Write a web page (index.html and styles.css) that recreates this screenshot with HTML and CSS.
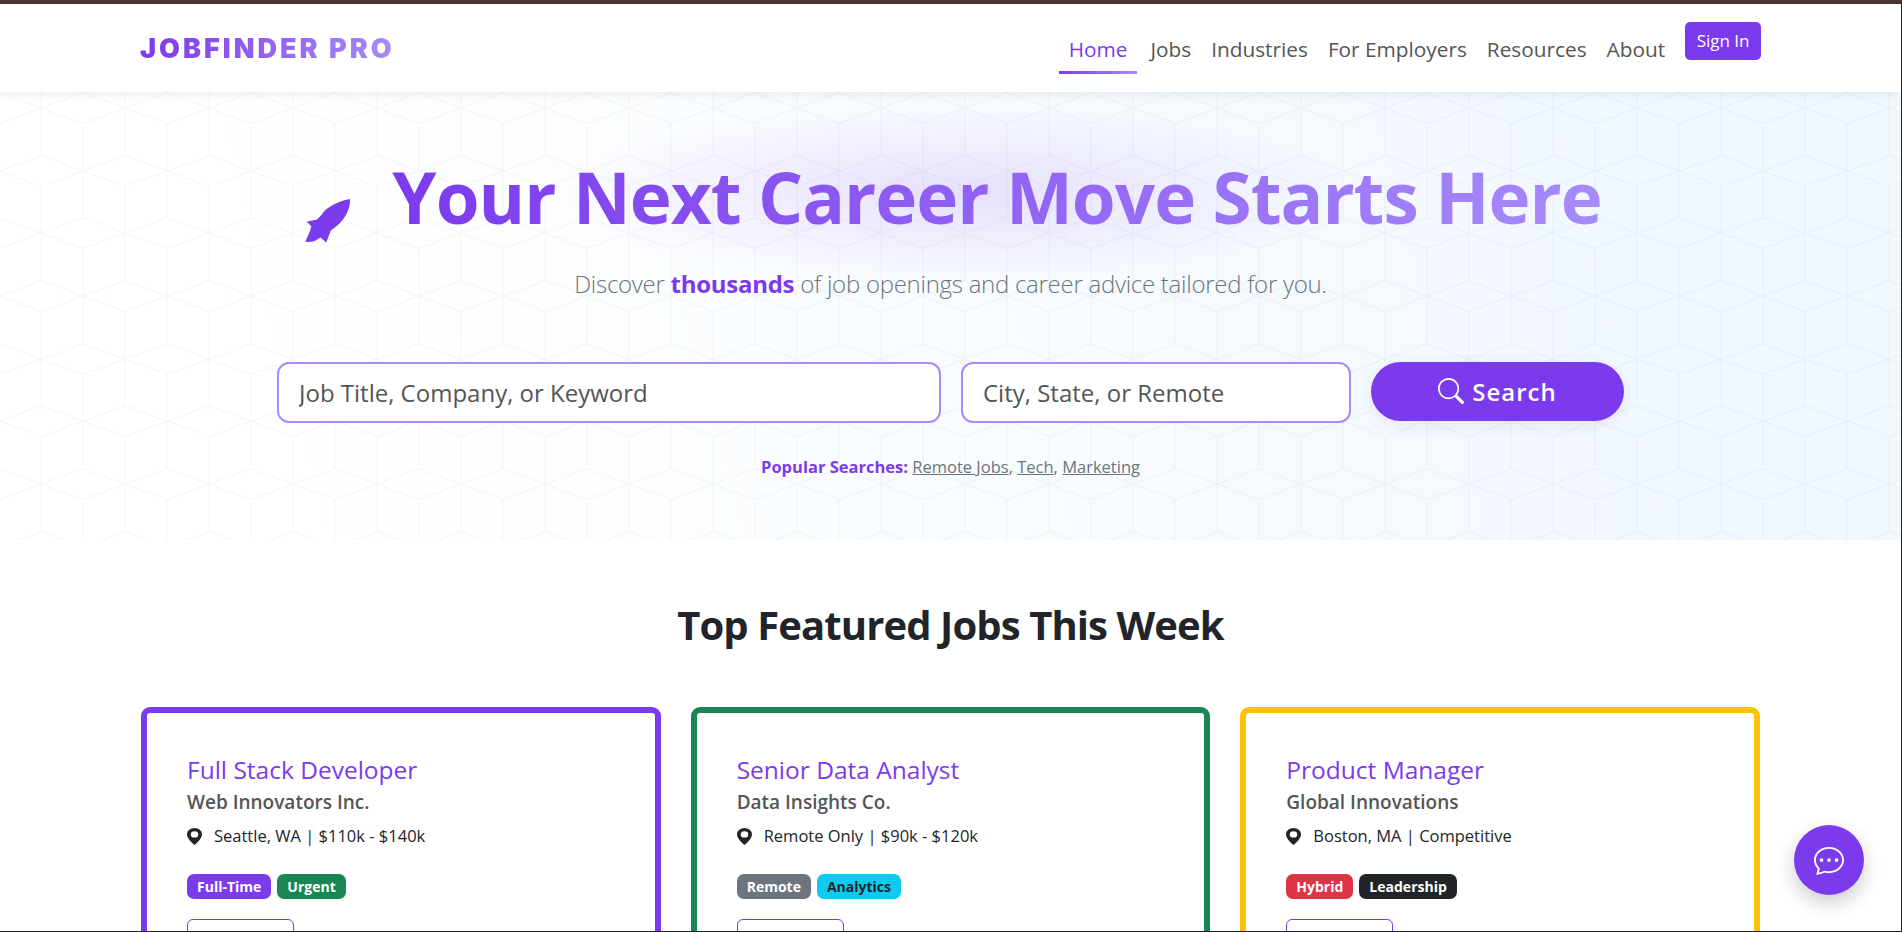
FILE: index.html
```html
<!DOCTYPE html>
<html lang="en">
<head>
  <meta charset="UTF-8" />
  <meta name="viewport" content="width=device-width, initial-scale=1.0"/>
  <title>JobFinder Pro</title>
  <link rel="stylesheet" href="styles.css">
</head>
<body>

  <div class="top-strip"></div>

  <!-- Navigation -->
  <nav class="navbar">
    <a class="logo" href="#">JOBFINDER PRO</a>
    <ul class="nav-links">
      <li><a class="nav-link active" href="#">Home</a></li>
      <li><a class="nav-link" href="#">Jobs</a></li>
      <li><a class="nav-link" href="#">Industries</a></li>
      <li><a class="nav-link" href="#">For Employers</a></li>
      <li><a class="nav-link" href="#">Resources</a></li>
      <li><a class="nav-link" href="#">About</a></li>
      <li><a class="sign-in" href="#">Sign In</a></li>
    </ul>
  </nav>

  <!-- Hero -->
  <header class="hero">
    <h1 class="hero-title">
      <svg class="rocket" viewBox="0 0 46 46" aria-hidden="true">
        <path d="M44 2C37 3 30 6 24.500 9.500C21 11.500 18.500 14 17 17L12.500 21.500L2.500 23.700L7 28L5.700 32.500L1.300 43Q6 43.500 10.700 42L15.700 38.700L21.300 43.700L25.700 32C32 28 37 23 40 17.500C43 12 44.500 7 44 2Z"/>
      </svg>
      <span class="title-text">Your Next Career Move Starts Here</span>
    </h1>
    <p class="hero-sub">Discover <strong>thousands</strong> of job openings and career advice tailored for you.</p>

    <form class="search-row">
      <input class="search-input job" type="text" placeholder="Job Title, Company, or Keyword">
      <input class="search-input place" type="text" placeholder="City, State, or Remote">
      <button class="search-btn" type="button">
        <svg viewBox="0 0 16 16" aria-hidden="true"><path d="M11.742 10.344a6.5 6.5 0 1 0-1.397 1.398h-.001c.03.04.062.078.098.115l3.85 3.85a1 1 0 0 0 1.415-1.414l-3.85-3.85a1.007 1.007 0 0 0-.115-.1zM12 6.5a5.5 5.5 0 1 1-11 0 5.5 5.5 0 0 1 11 0z"/></svg>
        Search
      </button>
    </form>

    <p class="popular"><strong>Popular Searches:</strong> <a href="#">Remote Jobs</a>, <a href="#">Tech</a>, <a href="#">Marketing</a></p>
  </header>

  <!-- Featured jobs -->
  <main class="featured">
    <h2>Top Featured Jobs This Week</h2>

    <div class="job-grid">
      <article class="job-card purple">
        <h3>Full Stack Developer</h3>
        <p class="company">Web Innovators Inc.</p>
        <p class="meta">
          <svg viewBox="2 0 12 16" preserveAspectRatio="none" aria-hidden="true"><path d="M8 16s6-5.686 6-10A6 6 0 0 0 2 6c0 4.314 6 10 6 10zm0-7a3 3 0 1 1 0-6 3 3 0 0 1 0 6z"/></svg>
          Seattle, WA | $110k - $140k
        </p>
        <div class="tags">
          <span class="tag bg-purple">Full-Time</span>
          <span class="tag bg-green">Urgent</span>
        </div>
        <a class="apply" href="#">Apply Now</a>
      </article>

      <article class="job-card green">
        <h3>Senior Data Analyst</h3>
        <p class="company">Data Insights Co.</p>
        <p class="meta">
          <svg viewBox="2 0 12 16" preserveAspectRatio="none" aria-hidden="true"><path d="M8 16s6-5.686 6-10A6 6 0 0 0 2 6c0 4.314 6 10 6 10zm0-7a3 3 0 1 1 0-6 3 3 0 0 1 0 6z"/></svg>
          Remote Only | $90k - $120k
        </p>
        <div class="tags">
          <span class="tag bg-gray">Remote</span>
          <span class="tag bg-cyan">Analytics</span>
        </div>
        <a class="apply" href="#">Apply Now</a>
      </article>

      <article class="job-card yellow">
        <h3>Product Manager</h3>
        <p class="company">Global Innovations</p>
        <p class="meta">
          <svg viewBox="2 0 12 16" preserveAspectRatio="none" aria-hidden="true"><path d="M8 16s6-5.686 6-10A6 6 0 0 0 2 6c0 4.314 6 10 6 10zm0-7a3 3 0 1 1 0-6 3 3 0 0 1 0 6z"/></svg>
          Boston, MA | Competitive
        </p>
        <div class="tags">
          <span class="tag bg-red">Hybrid</span>
          <span class="tag bg-dark">Leadership</span>
        </div>
        <a class="apply" href="#">Apply Now</a>
      </article>
    </div>
  </main>

  <!-- Chat -->
  <button class="chat-btn" title="Chat">
    <svg viewBox="0 0 16 16" aria-hidden="true">
      <path d="M5 8a1 1 0 1 1-2 0 1 1 0 0 1 2 0zm4 0a1 1 0 1 1-2 0 1 1 0 0 1 2 0zm3 1a1 1 0 1 0 0-2 1 1 0 0 0 0 2z"/>
      <path d="m2.165 15.803.02-.004c1.83-.363 2.948-.842 3.468-1.105A9.06 9.06 0 0 0 8 15c4.418 0 8-3.134 8-7s-3.582-7-8-7-8 3.134-8 7c0 1.76.743 3.37 1.97 4.6a10.437 10.437 0 0 1-.524 2.318l-.003.011a10.722 10.722 0 0 1-.244.637c-.079.186.074.394.273.362a21.673 21.673 0 0 0 .693-.125zm.8-3.108a1 1 0 0 0-.287-.801C1.618 10.83 1 9.468 1 8c0-3.192 3.004-6 7-6s7 2.808 7 6c0 3.193-3.004 6-7 6a8.06 8.06 0 0 1-2.088-.272 1 1 0 0 0-.711.074c-.387.196-1.24.57-2.634.893a10.97 10.97 0 0 0 .398-2z"/>
    </svg>
  </button>

</body>
</html>
```

FILE: styles.css
```css
:root {
  --primary: #7c3aed;
  --primary-light: #a78bfa;
  --text: #212529;
  --muted: #6c757d;
  --nav-text: #555555;
}

* {
  box-sizing: border-box;
}

html,
body {
  height: 100vh;
  margin: 0;
  overflow: hidden;
}

body {
  font-family: "Open Sans", "Noto Sans", sans-serif;
  color: var(--text);
  background: #ffffff;
  border-right: 1px solid #222222;
  border-bottom: 1px solid #222222;
}

a {
  text-decoration: none;
}

.top-strip {
  height: 4px;
  background: #4f3535;
}

/* Navigation */
.navbar {
  position: relative;
  z-index: 10;
  display: flex;
  justify-content: space-between;
  align-items: flex-start;
  height: 88px;
  padding: 18px 140px 0;
  background: #ffffff;
  box-shadow: 0 2px 10px rgba(0, 0, 0, 0.08);
}

.logo {
  margin-top: 11px;
  font-family: Inter, "Open Sans", sans-serif;
  font-size: 27px;
  font-weight: 900;
  line-height: 32px;
  letter-spacing: 3px;
  background: linear-gradient(90deg, var(--primary), var(--primary-light));
  -webkit-background-clip: text;
  background-clip: text;
  color: transparent;
}

.nav-links {
  display: flex;
  align-items: flex-start;
  list-style: none;
  margin: 0;
  padding: 0;
}

.nav-link {
  position: relative;
  display: block;
  padding: 12px 10px 10px;
  font-size: 20.8px;
  line-height: 30px;
  font-weight: 500;
  color: var(--nav-text);
}

.nav-link.active {
  margin-right: 3px;
  color: var(--primary);
}

.nav-link.active::after {
  content: "";
  position: absolute;
  left: 0;
  right: 0;
  bottom: 0;
  height: 3px;
  background: linear-gradient(90deg, var(--primary), var(--primary-light));
}

.sign-in {
  display: block;
  margin-left: 10px;
  padding: 6px 11.5px;
  height: 38px;
  font-size: 17px;
  line-height: 26px;
  color: #ffffff;
  background: var(--primary);
  border-radius: 5px;
}

/* Hero */
.hero {
  height: 448px;
  padding-top: 62px;
  text-align: center;
  background-color: #ffffff;
  background-image:
    url("data:image/svg+xml,%3Csvg xmlns='http://www.w3.org/2000/svg' width='84' height='125.33' viewBox='0 0 84 125.33'%3E%3Cpath fill='none' stroke='%23000' stroke-opacity='.03' stroke-width='1.2' d='M42 16L84 .7M42 16L0 .7M42 16L84 31.3M42 16L0 31.3M42 63.3L84 78.7L42 94L0 78.7ZM42 0V63.3M42 94V125.33M0 0V.7M0 31.3V125.33M84 0V.7M84 31.3V125.33'/%3E%3C/svg%3E"),
    radial-gradient(ellipse 400px 90px at 50.3% 22.5%, rgba(124, 58, 237, 0.14), rgba(124, 58, 237, 0)),
    linear-gradient(75deg, #ffffff 15%, #f1f8fe 85%);
  background-size: 84px 125.33px, auto, auto;
  background-position: -1.5px 0, 0 0, 0 0;
}

.hero-title {
  display: flex;
  justify-content: center;
  align-items: flex-start;
  gap: 40px;
  height: 86px;
  margin: 0 0 26px;
  padding-left: 5px;
  font-size: 71px;
  font-weight: 700;
  line-height: 86px;
  letter-spacing: -1px;
}

.rocket {
  width: 48px;
  height: 48px;
  margin-top: 43px;
  fill: var(--primary);
}

.title-text {
  background: linear-gradient(90deg, var(--primary), var(--primary-light));
  -webkit-background-clip: text;
  background-clip: text;
  color: transparent;
}

.hero-sub {
  margin: 0 0 59.5px;
  font-size: 24px;
  font-weight: 300;
  line-height: 36px;
  letter-spacing: -0.27px;
  color: var(--muted);
}

.hero-sub strong {
  font-weight: 700;
  color: var(--primary);
}

.search-row {
  display: flex;
  justify-content: center;
  align-items: flex-start;
  gap: 20px;
  margin-bottom: 32px;
}

.search-input {
  height: 61px;
  padding: 0 20px;
  font-family: inherit;
  font-size: 24px;
  color: #555555;
  background: #ffffff;
  border: 2px solid var(--primary-light);
  border-radius: 12px;
}

.search-input::placeholder {
  color: #555555;
  opacity: 1;
}

.search-input.job {
  width: 664px;
}

.search-input.place {
  width: 390px;
}

.search-btn {
  display: flex;
  justify-content: center;
  align-items: center;
  gap: 8px;
  width: 253px;
  height: 59px;
  font-family: inherit;
  font-size: 24px;
  font-weight: 600;
  letter-spacing: 1px;
  color: #ffffff;
  background: var(--primary);
  border: none;
  border-radius: 30px;
  box-shadow: 0 4px 15px rgba(124, 58, 237, 0.1);
}

.search-btn svg {
  width: 26px;
  height: 26px;
  fill: #ffffff;
}

.popular {
  margin: 0;
  font-size: 16.5px;
  line-height: 24px;
  color: var(--muted);
}

.popular strong {
  color: var(--primary);
}

.popular a {
  color: var(--muted);
  text-decoration: underline;
}

/* Featured jobs */
.featured {
  padding: 61px 141px 0;
}

.featured h2 {
  margin: 0 0 58px;
  text-align: center;
  font-size: 40px;
  font-weight: 700;
  line-height: 48px;
  letter-spacing: -0.9px;
}

.job-grid {
  display: grid;
  grid-template-columns: repeat(3, 1fr);
  gap: 30px;
}

.job-card {
  padding: 42px 40px 40px;
  background: #ffffff;
  border: 6px solid var(--primary);
  border-radius: 9px;
}

.job-card.green {
  border-color: #198754;
}

.job-card.yellow {
  border-color: #ffc107;
}

.job-card h3 {
  margin: 0 0 4px;
  font-size: 24.5px;
  font-weight: 500;
  line-height: 29px;
  color: var(--primary);
}

.company {
  margin: 0 0 7px;
  font-size: 19px;
  font-weight: 600;
  line-height: 28px;
  color: #555555;
}

.meta {
  display: flex;
  align-items: center;
  gap: 12px;
  margin: 0 0 25px;
  font-size: 16.5px;
  line-height: 26px;
  color: var(--text);
}

.meta svg {
  width: 15px;
  height: 17px;
  fill: var(--text);
}

.tags {
  display: flex;
  gap: 6px;
  margin-bottom: 20px;
}

.tag {
  padding: 3px 10px;
  font-size: 14px;
  font-weight: 700;
  line-height: 19px;
  color: #ffffff;
  border-radius: 7px;
}

.bg-purple { background: var(--primary); }
.bg-green { background: #198754; }
.bg-gray { background: var(--muted); }
.bg-cyan { background: #0dcaf0; color: var(--text); }
.bg-red { background: #dc3545; }
.bg-dark { background: var(--text); }

.apply {
  display: inline-block;
  padding: 18px 12.5px;
  font-size: 16px;
  line-height: 20px;
  color: var(--primary);
  border: 1.5px solid var(--primary);
  border-radius: 6px;
}

/* Chat */
.chat-btn {
  position: fixed;
  right: 38px;
  bottom: 37px;
  display: flex;
  justify-content: center;
  align-items: center;
  width: 70px;
  height: 70px;
  background: var(--primary);
  border: none;
  border-radius: 50%;
  box-shadow: 0 8px 20px rgba(0, 0, 0, 0.2);
}

.chat-btn svg {
  width: 30px;
  height: 30px;
  fill: #ffffff;
}
```
